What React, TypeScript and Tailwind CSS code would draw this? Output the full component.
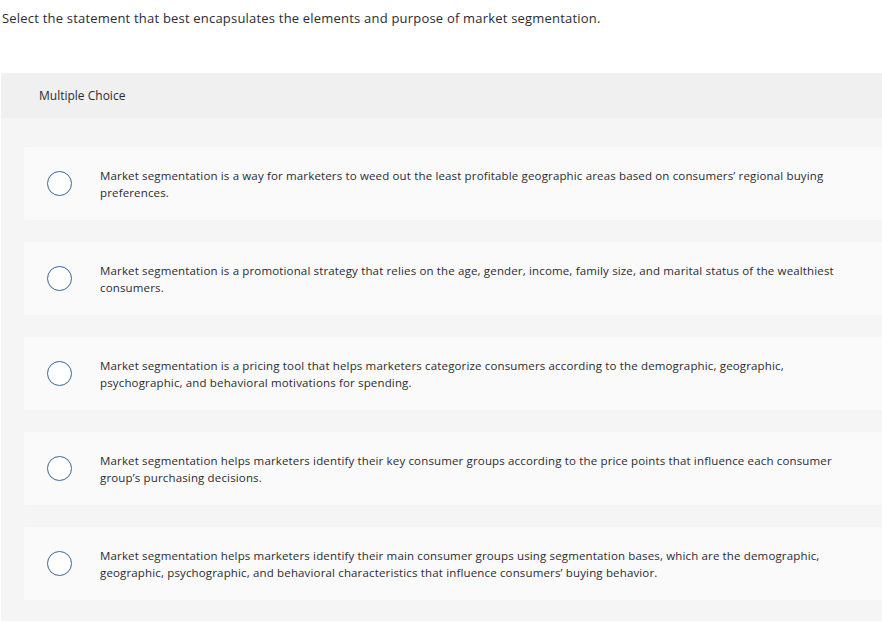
const options = [
  "Market segmentation is a way for marketers to weed out the least profitable geographic areas based on consumers’ regional buying preferences.",
  "Market segmentation is a promotional strategy that relies on the age, gender, income, family size, and marital status of the wealthiest consumers.",
  "Market segmentation is a pricing tool that helps marketers categorize consumers according to the demographic, geographic, psychographic, and behavioral motivations for spending.",
  "Market segmentation helps marketers identify their key consumer groups according to the price points that influence each consumer group’s purchasing decisions.",
  "Market segmentation helps marketers identify their main consumer groups using segmentation bases, which are the demographic, geographic, psychographic, and behavioral characteristics that influence consumers’ buying behavior.",
];

export default function App() {
  return (
    <div className="min-h-[622px] bg-white text-[#2b2b33]" style={{ fontFamily: '"Open Sans", "Liberation Sans", sans-serif' }}>
      <p className="pl-[2px] pt-[9px] text-[13px] leading-[18px] tracking-[0.2px]">
        Select the statement that best encapsulates the elements and purpose of market segmentation.
      </p>

      <div className="ml-[1px] mt-[46px] bg-[#f5f5f5] pb-[21px]">
        <div className="flex h-[45px] items-center bg-[#f0f0f0] pl-[38px] text-[12px] tracking-[0px]">
          Multiple Choice
        </div>
        <div className="flex flex-col gap-[22px] pl-[23px] pt-[29px]">
          {options.map((text, i) => (
            <div key={i} className="flex h-[73px] items-center rounded-l-[3px] bg-[#fafafa]">
              <div className="ml-[23px] h-[25px] w-[25px] shrink-0 rounded-full border-[1.5px] border-[#35669a] bg-white" />
              <p className="ml-[28px] mr-[28px] text-[11.5px] leading-[17px] tracking-[0.15px]">{text}</p>
            </div>
          ))}
        </div>
      </div>
    </div>
  );
}
